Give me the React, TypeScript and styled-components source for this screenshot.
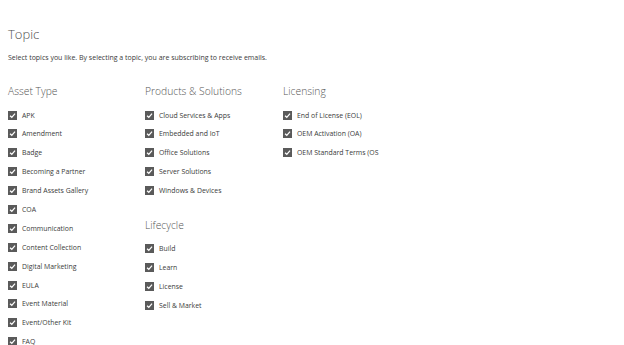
import React from 'react';
import styled, { createGlobalStyle } from 'styled-components';

const GlobalStyle = createGlobalStyle`
	html, body {
		margin: 0;
		padding: 0;
		background: #fff;
	}
	body {
		font-family: 'Open Sans', 'Noto Sans', sans-serif;
		color: #333;
	}
`;

const Page = styled.div`
	padding: 25px 8px 0;
	height: 345px;
	box-sizing: border-box;
	overflow: hidden;
`;

const Title = styled.h1`
	margin: 0;
	font-size: 13px;
	font-weight: 300;
	color: #505050;
	line-height: 18px;
`;

const Intro = styled.p`
	margin: 10px 0 0;
	font-size: 7px;
	line-height: 10px;
	color: #3a3a3a;
`;

const Columns = styled.div`
	display: grid;
	grid-template-columns: 137px 138px 140px;
	margin-top: 20px;
`;

const Column = styled.div`
	display: flex;
	flex-direction: column;
	gap: 21px;
`;

const Group = styled.section`
	display: flex;
	flex-direction: column;
`;

const GroupTitle = styled.h2`
	margin: 0 0 11px;
	font-size: 10.3px;
	font-weight: 300;
	color: #555;
	line-height: 16px;
`;

const List = styled.ul`
	list-style: none;
	margin: 0;
	padding: 0;
	display: flex;
	flex-direction: column;
	gap: 8.9px;
`;

const Item = styled.li`
	display: flex;
	align-items: center;
	gap: 5px;
	height: 10px;
	font-size: 6.9px;
	color: #3a3a3a;
	white-space: nowrap;
`;

const Box = styled.span`
	width: 9px;
	height: 9px;
	background: #5a5a5a;
	display: flex;
	align-items: center;
	justify-content: center;
	flex-shrink: 0;
`;

const Check = () => (
	<Box>
		<svg width="7" height="7" viewBox="0 0 10 10">
			<path d="M1.5 5.3 L4 7.6 L8.6 2.3" fill="none" stroke="#fff" strokeWidth="1.8" />
		</svg>
	</Box>
);

const groups: { title: string; items: string[] }[][] = [
	[
		{
			title: 'Asset Type',
			items: [
				'APK',
				'Amendment',
				'Badge',
				'Becoming a Partner',
				'Brand Assets Gallery',
				'COA',
				'Communication',
				'Content Collection',
				'Digital Marketing',
				'EULA',
				'Event Material',
				'Event/Other Kit',
				'FAQ',
			],
		},
	],
	[
		{
			title: 'Products & Solutions',
			items: ['Cloud Services & Apps', 'Embedded and IoT', 'Office Solutions', 'Server Solutions', 'Windows & Devices'],
		},
		{
			title: 'Lifecycle',
			items: ['Build', 'Learn', 'License', 'Sell & Market'],
		},
	],
	[
		{
			title: 'Licensing',
			items: ['End of License (EOL)', 'OEM Activation (OA)', 'OEM Standard Terms (OS'],
		},
	],
];

const App = () => {
	return (
		<>
			<GlobalStyle />
			<Page>
				<Title>Topic</Title>
				<Intro>Select topics you like. By selecting a topic, you are subscribing to receive emails.</Intro>
				<Columns>
					{groups.map((col, i) => (
						<Column key={i}>
							{col.map((g) => (
								<Group key={g.title}>
									<GroupTitle>{g.title}</GroupTitle>
									<List>
										{g.items.map((item) => (
											<Item key={item}>
												<Check />
												{item}
											</Item>
										))}
									</List>
								</Group>
							))}
						</Column>
					))}
				</Columns>
			</Page>
		</>
	);
};

export default App;
